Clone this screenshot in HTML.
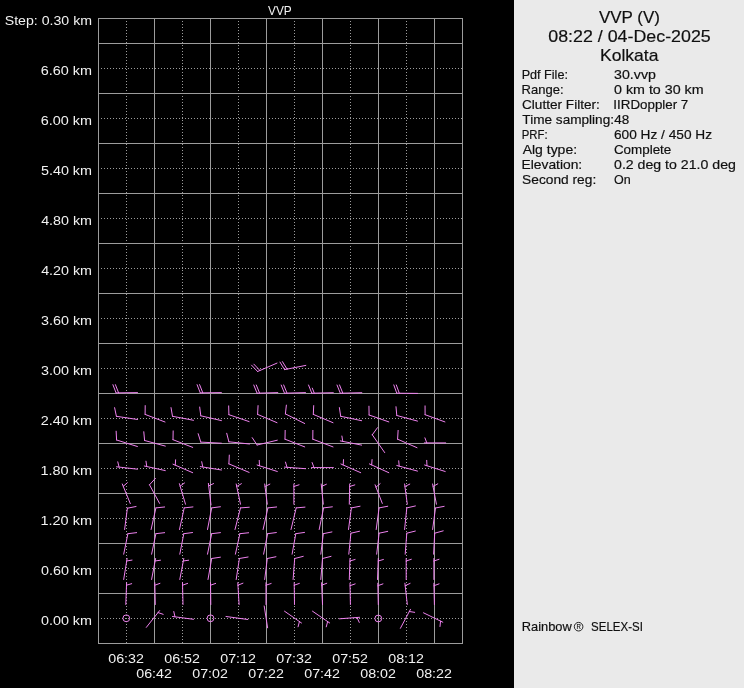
<!DOCTYPE html><html><head><meta charset="utf-8"><style>html,body{margin:0;padding:0;background:#000;width:744px;height:688px;overflow:hidden}svg{display:block;will-change:transform}</style></head><body>
<svg width="744" height="688" viewBox="0 0 744 688" font-family="Liberation Sans, sans-serif">
<rect width="744" height="688" fill="#000"/>
<rect x="514" y="0" width="230" height="688" fill="#eaeaea"/>
<path d="M126.5 18V643M182.5 18V643M238.5 18V643M294.5 18V643M350.5 18V643M406.5 18V643M98 68.5H462M98 118.5H462M98 168.5H462M98 218.5H462M98 268.5H462M98 318.5H462M98 368.5H462M98 418.5H462M98 468.5H462M98 518.5H462M98 568.5H462M98 618.5H462" stroke="#9c9c9c" stroke-width="1" stroke-dasharray="1 2" fill="none"/>
<path d="M154.5 18V643M210.5 18V643M266.5 18V643M322.5 18V643M378.5 18V643M434.5 18V643M98 43.5H462M98 93.5H462M98 143.5H462M98 193.5H462M98 243.5H462M98 293.5H462M98 343.5H462M98 393.5H462M98 443.5H462M98 493.5H462M98 543.5H462M98 593.5H462" stroke="#9c9c9c" stroke-width="1" fill="none"/>
<rect x="98.5" y="18.5" width="364" height="625" stroke="#9c9c9c" stroke-width="1" fill="none"/>
<path d="M277 363.1L257.6 371.5M257.6 371.5L251.53 365.13M259.89 370.51L253.83 364.13M305.8 365.4L284.6 369.6M284.6 369.6L279.98 362.11M287.05 369.11L282.44 361.62M137.5 392.6L116.1 392.9M116.1 392.9L112.9 384.7M118.6 392.86L115.4 384.67M221.4 392.6L200.3 392.9M200.3 392.9L197.1 384.7M202.8 392.86L199.6 384.67M277.8 392.6L257.1 393.2M257.1 393.2L253.78 385.05M259.6 393.13L256.28 384.98M305.5 392.6L284.5 393.2M284.5 393.2L281.18 385.05M287 393.13L283.68 384.98M333.3 392.7L311.8 393.2M311.8 393.2L308.53 385.03M314.3 393.14L312.29 388.13M361.8 392.7L340.3 393.2M340.3 393.2L337.03 385.03M342.8 393.14L339.53 384.97M417.5 393.4L396.8 393.2M396.8 393.2L393.8 384.93M399.3 393.22L396.3 384.95M137.5 419.5L116.4 416.3M116.4 416.3L114.6 407.69M165 422L145.1 414.4M145.1 414.4L145.2 405.6M193.5 420.3L172.5 416.3M172.5 416.3L171.03 407.62M221.4 420.6L200.8 415.8M200.8 415.8L199.68 407.07M249.1 421.6L228.9 414.7M228.9 414.7L228.68 405.9M277 422.7L257.6 414.4M257.6 414.4L258.06 405.61M304.7 423.5L285.4 413.9M285.4 413.9L286.37 405.15M333 422.7L313.3 414.4M313.3 414.4L313.71 405.61M361.6 420.7L340.7 416.3M340.7 416.3L339.4 407.6M388.8 421.9L369.1 415M369.1 415L368.95 406.2M417.5 421.1L396.8 415.5M396.8 415.5L396 406.74M444.9 421.9L425.1 414.7M425.1 414.7L425.06 405.9M137.4 446.5L116.6 440M116.6 440L116.14 431.21M165.3 446.1L144.6 440.5M144.6 440.5L143.8 431.74M192.7 447.4L173 439.7M173 439.7L173.17 430.9M221.4 443.2L200.8 442.1M200.8 442.1L198.16 433.7M249.5 444L228.9 441.8M228.9 441.8L226.71 433.28M277.3 440.2L257.1 445M257.1 445L252.21 437.68M304.7 446.9L285 439.2M285 439.2L285.17 430.4M333 446.9L312.8 439.2M312.8 439.2L312.9 430.4M361.6 445.1L340.3 440.9M342.75 441.38L341.88 436.05M384.7 452.6L372.3 434.8M372.3 434.8L377.47 427.68M417 447.7L397.6 439.2M397.6 439.2L398.13 430.42M445.7 442.9L424.3 442.9M426.8 442.9L424.91 437.84M137.5 469.2L116.6 466.8M119.08 467.09L117.78 461.84M165.3 470.6L144.3 466M146.74 466.53L145.99 461.19M192.7 472.7L173 464.2M175.3 465.19L175.59 459.8M221.4 470L200.3 466.6M202.77 467L201.71 461.7M249.1 472.4L228.9 463.9M228.9 463.9L229.3 455.11M277.3 471.5L257.1 465M259.48 465.77L259.25 460.37M305.5 468.7L284.5 467.1M286.99 467.29L285.49 462.1M333.4 467.6L311.5 467.6M314 467.6L312.11 462.54M360.7 472.7L340.9 464M343.19 465.01L343.52 459.62M388.8 472.7L369.4 463.9M371.68 464.93L372.08 459.55M417.5 471.1L396.8 465.5M399.21 466.15L398.72 460.78M445.2 471.5L424.6 465M426.98 465.75L426.72 460.36M130.3 503.6L122.3 484M123.24 486.31L127.32 482.77M159.6 503.4L149.5 484.8M149.5 484.8L155.45 478.32M185.5 504.2L179.4 483.7M180.11 486.1L184.52 482.98M211 504.9L208.4 483.4M208.7 485.88L213.58 483.56M240.5 504.2L236.2 484M236.72 486.45L241.37 483.7M267.3 504.2L264.7 484M265.02 486.48L269.88 484.12M293.9 504.2L293.9 484M293.9 486.5L299.02 484.79M323.3 504.2L321.2 484M321.46 486.49L326.37 484.25M349.3 504.2L349.7 484M349.65 486.5L354.8 484.89M382.3 503.4L375.1 484.8M376 487.13L380.14 483.67M407.3 504.2L404.6 484M404.93 486.48L409.78 484.1M436.4 504.2L432.6 484M433.06 486.46L437.77 483.82M124.6 529.5L127.4 508.2M127.4 508.2L136.04 506.51M151.1 529.5L155.9 507.9M155.9 507.9L164.65 506.97M179.5 529.5L184.2 507.9M184.2 507.9L192.95 506.93M207.5 529.5L211.7 507.9M211.7 507.9L220.42 506.74M235 529.5L240.5 507.9M240.5 507.9L249.27 507.23M263.1 529.5L267.9 507.9M267.9 507.9L276.65 506.97M291 529.5L296.2 507.9M296.2 507.9L304.97 507.12M319.2 529.5L323.6 507.9M323.6 507.9L332.33 506.82M348.5 529.5L351.4 507.9M351.4 507.9L360.04 506.24M376.2 529.5L379.1 507.9M379.1 507.9L387.74 506.24M404.6 529.5L406.8 507.9M406.8 507.9L415.38 505.96M432.6 529.5L435.5 508M435.5 508L444.14 506.34M123.7 554.2L127.9 533.7M127.9 533.7L136.63 532.63M151.6 554.2L155.9 533.7M155.9 533.7L164.64 532.67M179.8 554.2L183.8 533.7M183.8 533.7L192.52 532.55M207.5 554.2L211.7 533.7M211.7 533.7L220.43 532.63M235.4 554.2L239.9 533.7M239.9 533.7L248.65 532.75M263.6 554.2L267.6 533.7M267.6 533.7L276.32 532.55M292.1 554.2L295.8 533.7M295.8 533.7L304.51 532.42M320.8 554.2L323.3 533.7M323.3 533.7L331.92 531.93M348.8 554.2L350.9 533.2M350.9 533.2L359.48 531.25M376.7 554.2L379.1 533.2M379.1 533.2L387.71 531.37M405.2 554.2L406.8 533.2M406.8 533.2L415.33 531.05M433.6 554.2L434.7 533.2M434.7 533.2L443.18 530.85M123.7 579.5L127.1 558.5M126.7 560.97L132.03 560.09M151.6 579.5L155.6 558.5M155.13 560.96L160.48 560.22M179.8 579.5L183.8 558.5M183.33 560.96L188.68 560.22M208 579.5L211.7 558.5M211.7 558.5L220.4 557.19M236.2 579.5L239.4 558.5M239.4 558.5L248.07 556.99M264.7 579.5L267.3 558.5M267.3 558.5L275.92 556.75M293.1 579.5L294.7 558.5M294.7 558.5L303.23 556.35M320.8 579.5L322.5 558.5M322.5 558.5L331.04 556.39M349.3 579.5L350 558.5M349.92 561L355.09 559.46M377.5 579.5L378.3 558.5M378.2 561L383.39 559.48M406.2 579.5L406.2 558.5M406.2 561L411.32 559.29M433.9 579.5L433.9 558.5M433.9 561L439.02 559.29M125.8 604.5L126.6 582.7M126.51 585.2L131.69 583.67M155.3 604.5L154.8 582.7M154.86 585.2L159.94 583.37M183 604.5L182.5 582.7M182.56 585.2L187.64 583.37M210.8 604.5L210.5 582.7M210.53 585.2L215.63 583.42M239.1 604.5L237.8 582.7M237.95 585.2L242.96 583.18M266 604.5L266 582.7M266 585.2L271.12 583.49M294.5 604.5L294.2 582.7M294.23 585.2L299.33 583.42M322.5 604.5L321.6 582.7M321.7 585.2L326.75 583.27M350.4 604.5L350 583.2M350.05 585.7L355.13 583.89M378.3 604.5L377.8 583.2M377.86 585.7L382.94 583.87M407.3 604.5L404.9 583.2M405.18 585.68L410.08 583.41M434.4 604.5L433.9 583.2M433.96 585.7L439.04 583.87M146.3 627.4L159.6 610.6M158.05 612.56L163.15 614.33M193.5 619.3L172.5 616.5M174.98 616.83L173.78 611.57M247.8 619.5L226 616.5M267.6 627.8L264.2 606M284.5 611.2L301.5 623M299.45 621.57L298.06 626.79M312.5 611.2L329.7 623M327.64 621.59L326.28 626.81M339.5 618.8L359.5 617.3M357.01 617.49L359.27 622.39M400.4 628.3L410.5 609.3M409.33 611.51L414.66 612.36M423.5 612.8L442.8 622.2M440.55 621.11L440 626.48" stroke="#ee82ee" stroke-width="1.0" fill="none" stroke-linecap="round"/>
<circle cx="126.3" cy="618.3" r="3.4" stroke="#ee82ee" stroke-width="1.0" fill="none"/>
<circle cx="210.5" cy="618.3" r="3.4" stroke="#ee82ee" stroke-width="1.0" fill="none"/>
<circle cx="378.3" cy="618.5" r="3.4" stroke="#ee82ee" stroke-width="1.0" fill="none"/>
<circle cx="578.6" cy="626.7" r="4.3" stroke="#101010" stroke-width="0.9" fill="none"/>
<text x="576.4" y="629.3" font-size="7.85" fill="#101010" stroke="#101010" stroke-width="0.18" textLength="4.39" lengthAdjust="spacingAndGlyphs">R</text>
<text x="268.04" y="14.9" font-size="12.51" fill="#f2f2f2" textLength="23.66" lengthAdjust="spacingAndGlyphs">VVP</text>
<text x="4.76" y="24.7" font-size="12.4" fill="#f2f2f2" textLength="87.26" lengthAdjust="spacingAndGlyphs">Step: 0.30 km</text>
<text x="40.78" y="75" font-size="12.28" fill="#f2f2f2" textLength="51.25" lengthAdjust="spacingAndGlyphs">6.60 km</text>
<text x="40.78" y="125" font-size="12.28" fill="#f2f2f2" textLength="51.25" lengthAdjust="spacingAndGlyphs">6.00 km</text>
<text x="40.93" y="175" font-size="12.28" fill="#f2f2f2" textLength="51.1" lengthAdjust="spacingAndGlyphs">5.40 km</text>
<text x="41.18" y="225" font-size="12.28" fill="#f2f2f2" textLength="50.85" lengthAdjust="spacingAndGlyphs">4.80 km</text>
<text x="41.18" y="275" font-size="12.28" fill="#f2f2f2" textLength="50.85" lengthAdjust="spacingAndGlyphs">4.20 km</text>
<text x="40.96" y="325" font-size="12.28" fill="#f2f2f2" textLength="51.07" lengthAdjust="spacingAndGlyphs">3.60 km</text>
<text x="40.96" y="375" font-size="12.28" fill="#f2f2f2" textLength="51.07" lengthAdjust="spacingAndGlyphs">3.00 km</text>
<text x="40.78" y="425" font-size="12.28" fill="#f2f2f2" textLength="51.25" lengthAdjust="spacingAndGlyphs">2.40 km</text>
<text x="40.41" y="475" font-size="12.28" fill="#f2f2f2" textLength="51.63" lengthAdjust="spacingAndGlyphs">1.80 km</text>
<text x="40.41" y="525" font-size="12.28" fill="#f2f2f2" textLength="51.63" lengthAdjust="spacingAndGlyphs">1.20 km</text>
<text x="40.93" y="575" font-size="12.28" fill="#f2f2f2" textLength="51.1" lengthAdjust="spacingAndGlyphs">0.60 km</text>
<text x="40.93" y="625" font-size="12.28" fill="#f2f2f2" textLength="51.1" lengthAdjust="spacingAndGlyphs">0.00 km</text>
<text x="108.23" y="662.9" font-size="12.19" fill="#f2f2f2" textLength="35.68" lengthAdjust="spacingAndGlyphs">06:32</text>
<text x="164.23" y="662.9" font-size="12.19" fill="#f2f2f2" textLength="35.68" lengthAdjust="spacingAndGlyphs">06:52</text>
<text x="220.23" y="662.9" font-size="12.19" fill="#f2f2f2" textLength="35.68" lengthAdjust="spacingAndGlyphs">07:12</text>
<text x="276.23" y="662.9" font-size="12.19" fill="#f2f2f2" textLength="35.68" lengthAdjust="spacingAndGlyphs">07:32</text>
<text x="332.23" y="662.9" font-size="12.19" fill="#f2f2f2" textLength="35.68" lengthAdjust="spacingAndGlyphs">07:52</text>
<text x="388.23" y="662.9" font-size="12.19" fill="#f2f2f2" textLength="35.68" lengthAdjust="spacingAndGlyphs">08:12</text>
<text x="136.23" y="677.9" font-size="12.04" fill="#f2f2f2" textLength="35.68" lengthAdjust="spacingAndGlyphs">06:42</text>
<text x="192.23" y="677.9" font-size="12.04" fill="#f2f2f2" textLength="35.68" lengthAdjust="spacingAndGlyphs">07:02</text>
<text x="248.23" y="677.9" font-size="12.04" fill="#f2f2f2" textLength="35.68" lengthAdjust="spacingAndGlyphs">07:22</text>
<text x="304.23" y="677.9" font-size="12.04" fill="#f2f2f2" textLength="35.68" lengthAdjust="spacingAndGlyphs">07:42</text>
<text x="360.23" y="677.9" font-size="12.04" fill="#f2f2f2" textLength="35.68" lengthAdjust="spacingAndGlyphs">08:02</text>
<text x="416.23" y="677.9" font-size="12.04" fill="#f2f2f2" textLength="35.68" lengthAdjust="spacingAndGlyphs">08:22</text>
<text x="598.91" y="23.1" font-size="16.2" fill="#101010" stroke="#101010" stroke-width="0.18" textLength="61.13" lengthAdjust="spacingAndGlyphs">VVP (V)</text>
<text x="548.29" y="41.6" font-size="16.2" fill="#101010" stroke="#101010" stroke-width="0.18" textLength="162.43" lengthAdjust="spacingAndGlyphs">08:22 / 04-Dec-2025</text>
<text x="600.06" y="61.2" font-size="16.2" fill="#101010" stroke="#101010" stroke-width="0.18" textLength="58.41" lengthAdjust="spacingAndGlyphs">Kolkata</text>
<text x="521.66" y="78.5" font-size="12.4" fill="#101010" stroke="#101010" stroke-width="0.18" textLength="46.28" lengthAdjust="spacingAndGlyphs">Pdf File:</text>
<text x="614.07" y="78.5" font-size="12.4" fill="#101010" stroke="#101010" stroke-width="0.18" textLength="41.82" lengthAdjust="spacingAndGlyphs">30.vvp</text>
<text x="521.63" y="93.5" font-size="12.4" fill="#101010" stroke="#101010" stroke-width="0.18" textLength="41.94" lengthAdjust="spacingAndGlyphs">Range:</text>
<text x="614.03" y="93.5" font-size="12.4" fill="#101010" stroke="#101010" stroke-width="0.18" textLength="89.6" lengthAdjust="spacingAndGlyphs">0 km to 30 km</text>
<text x="522.02" y="108.5" font-size="12.4" fill="#101010" stroke="#101010" stroke-width="0.18" textLength="77.82" lengthAdjust="spacingAndGlyphs">Clutter Filter:</text>
<text x="613.37" y="108.5" font-size="12.4" fill="#101010" stroke="#101010" stroke-width="0.18" textLength="74.92" lengthAdjust="spacingAndGlyphs">IIRDoppler 7</text>
<text x="522.39" y="123.5" font-size="12.4" fill="#101010" stroke="#101010" stroke-width="0.18" textLength="91.63" lengthAdjust="spacingAndGlyphs">Time sampling:</text>
<text x="614.3" y="123.5" font-size="12.4" fill="#101010" stroke="#101010" stroke-width="0.18" textLength="15.01" lengthAdjust="spacingAndGlyphs">48</text>
<text x="521.76" y="138.5" font-size="12.4" fill="#101010" stroke="#101010" stroke-width="0.18" textLength="25.86" lengthAdjust="spacingAndGlyphs">PRF:</text>
<text x="613.92" y="138.5" font-size="12.4" fill="#101010" stroke="#101010" stroke-width="0.18" textLength="98.18" lengthAdjust="spacingAndGlyphs">600 Hz / 450 Hz</text>
<text x="522.67" y="153.5" font-size="12.4" fill="#101010" stroke="#101010" stroke-width="0.18" textLength="54.41" lengthAdjust="spacingAndGlyphs">Alg type:</text>
<text x="613.93" y="153.5" font-size="12.4" fill="#101010" stroke="#101010" stroke-width="0.18" textLength="57.34" lengthAdjust="spacingAndGlyphs">Complete</text>
<text x="521.56" y="168.5" font-size="12.4" fill="#101010" stroke="#101010" stroke-width="0.18" textLength="60.67" lengthAdjust="spacingAndGlyphs">Elevation:</text>
<text x="614.03" y="168.5" font-size="12.4" fill="#101010" stroke="#101010" stroke-width="0.18" textLength="121.87" lengthAdjust="spacingAndGlyphs">0.2 deg to 21.0 deg</text>
<text x="522.08" y="183.5" font-size="12.4" fill="#101010" stroke="#101010" stroke-width="0.18" textLength="74.16" lengthAdjust="spacingAndGlyphs">Second reg:</text>
<text x="614.01" y="183.5" font-size="12.4" fill="#101010" stroke="#101010" stroke-width="0.18" textLength="16.7" lengthAdjust="spacingAndGlyphs">On</text>
<text x="521.74" y="630.6" font-size="12.4" fill="#101010" stroke="#101010" stroke-width="0.18" textLength="50.01" lengthAdjust="spacingAndGlyphs">Rainbow</text>
<text x="591.08" y="630.6" font-size="12.4" fill="#101010" stroke="#101010" stroke-width="0.18" textLength="51.78" lengthAdjust="spacingAndGlyphs">SELEX-SI</text>
</svg></body></html>
